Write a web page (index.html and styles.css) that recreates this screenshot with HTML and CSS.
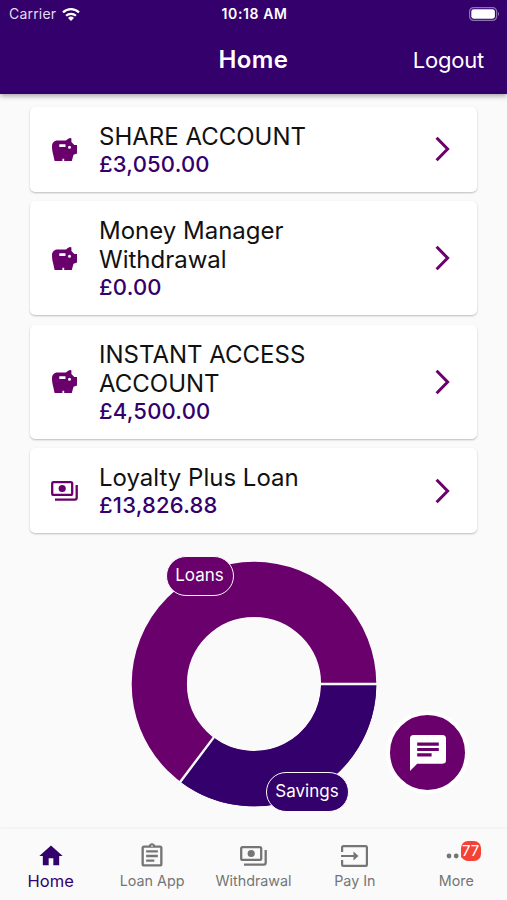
FILE: index.html
```
<!DOCTYPE html>
<html lang="en">
<head>
  <meta charset="UTF-8">
  <meta name="viewport" content="width=device-width, initial-scale=1.0">
  <title>Home</title>
  <link rel="stylesheet" href="styles.css">
</head>
<body>
  <!-- shared icons -->
  <svg width="0" height="0" class="icon-defs">
    <symbol id="piggy" viewBox="0 0 25 23">
      <path fill-rule="evenodd" d="M5.5 2.6H14C15 1.2 16.5 .3 18.5 0L19.4 .6V4L22.3 7H25V15.6L21.5 16.8L19.8 23H12.2V20.8H10.4V23H2.6L1.5 18C.5 14.5 0 11.5 0 8.6C0 5 2 2.6 5.5 2.6ZM7.3 6.3V9H13.5V6.3ZM17.5 7.8A1.5 1.5 0 1 0 17.5 10.8A1.5 1.5 0 1 0 17.5 7.8Z"/>
    </symbol>
    <symbol id="cash" viewBox="0 0 27 20">
      <rect x="1.2" y="1.2" width="20" height="12.6" rx="1.4" fill="none" stroke="currentColor" stroke-width="2.3"/>
      <circle cx="11.2" cy="7.5" r="3.6"/>
      <path d="M25.7 4V16.8Q25.7 18.7 23.8 18.7H4" fill="none" stroke="currentColor" stroke-width="2.3"/>
    </symbol>
    <symbol id="chevron" viewBox="0 0 15 26">
      <path d="M1.6 1.8L12.6 13L1.6 24.2" fill="none" stroke="currentColor" stroke-width="3"/>
    </symbol>
  </svg>

  <header>
    <div class="status-bar">
      <div class="carrier">
        Carrier
        <svg class="wifi" viewBox="0 0 18 14">
          <path d="M9 14L6 11A4.3 4.3 0 0 1 12 11Z" fill="#fff"/>
          <path d="M4.1 8.8A7 7 0 0 1 13.9 8.8M1 5.3A11.6 11.6 0 0 1 17 5.3" fill="none" stroke="#fff" stroke-width="2.3"/>
        </svg>
      </div>
      <div class="time">10:18 AM</div>
      <svg class="battery" viewBox="0 0 31 14">
        <rect x=".6" y=".6" width="27" height="12.8" rx="4" fill="none" stroke="#8c74b0" stroke-width="1.2"/>
        <rect x="2.3" y="2.3" width="23.6" height="9.4" rx="2.4" fill="#fff"/>
        <path d="M29 4.8Q31 7 29 9.2Z" fill="#8c74b0"/>
      </svg>
    </div>
    <div class="title-bar">
      <h1>Home</h1>
      <a class="logout">Logout</a>
    </div>
  </header>

  <main>
    <section class="accounts">
      <div class="account">
        <svg class="piggy"><use href="#piggy"/></svg>
        <div class="account-text">
          <div class="name">SHARE ACCOUNT</div>
          <div class="balance">£3,050.00</div>
        </div>
        <svg class="chevron"><use href="#chevron"/></svg>
      </div>
      <div class="account">
        <svg class="piggy"><use href="#piggy"/></svg>
        <div class="account-text">
          <div class="name">Money Manager<br>Withdrawal</div>
          <div class="balance">£0.00</div>
        </div>
        <svg class="chevron"><use href="#chevron"/></svg>
      </div>
      <div class="account">
        <svg class="piggy"><use href="#piggy"/></svg>
        <div class="account-text">
          <div class="name">INSTANT ACCESS<br>ACCOUNT</div>
          <div class="balance">£4,500.00</div>
        </div>
        <svg class="chevron"><use href="#chevron"/></svg>
      </div>
      <div class="account">
        <svg class="cash"><use href="#cash"/></svg>
        <div class="account-text">
          <div class="name">Loyalty Plus Loan</div>
          <div class="balance">£13,826.88</div>
        </div>
        <svg class="chevron"><use href="#chevron"/></svg>
      </div>
    </section>

    <!-- loans / savings split -->
    <section class="chart">
      <svg viewBox="-123 -123 246 246">
        <circle r="94.7" fill="none" stroke="#6a006c" stroke-width="55.2"/>
        <path d="M94.7 0A94.7 94.7 0 0 1 -57 75.6" fill="none" stroke="#34006c" stroke-width="55.2"/>
        <path d="M65 0H123M-39.1 51.9L-74.4 98.7" stroke="#fafafa" stroke-width="2.4"/>
      </svg>
      <span class="pill loans">Loans</span>
      <span class="pill savings">Savings</span>
    </section>
  </main>

  <button class="chat">
    <svg viewBox="0 0 36 36">
      <path fill="#fff" d="M3.6 0H32.4Q36 0 36 3.6V25.2Q36 28.8 32.4 28.8H7.2L0 36V3.6Q0 0 3.6 0Z"/>
      <path d="M7.2 9.2H28.8M7.2 14.5H28.8M7.2 19.8H21.6" stroke="#6a006c" stroke-width="3.2"/>
    </svg>
  </button>

  <nav>
    <a class="tab active">
      <svg viewBox="0 0 24 24"><path d="M10 20v-6h4v6h5v-8h3L12 3 2 12h3v8z"/></svg>
      <span>Home</span>
    </a>
    <a class="tab">
      <svg viewBox="0 0 24 24"><path d="M7 15h7v2H7zm0-4h10v2H7zm0-4h10v2H7zm12-4h-4.18C14.4 1.84 13.3 1 12 1c-1.3 0-2.4.84-2.82 2H5c-1.1 0-2 .9-2 2v14c0 1.1.9 2 2 2h14c1.1 0 2-.9 2-2V5c0-1.1-.9-2-2-2zm-7-.25c.41 0 .75.34.75.75s-.34.75-.75.75-.75-.34-.75-.75.34-.75.75-.75zM19 19H5V5h14v14z"/></svg>
      <span>Loan App</span>
    </a>
    <a class="tab">
      <svg class="tab-cash"><use href="#cash"/></svg>
      <span>Withdrawal</span>
    </a>
    <a class="tab">
      <svg class="tab-pay" viewBox="0 0 27 22">
        <path d="M1.1 7V2.5Q1.1 1.1 2.5 1.1H24.5Q25.9 1.1 25.9 2.5V19.5Q25.9 20.9 24.5 20.9H2.5Q1.1 20.9 1.1 19.5V15M0 11H14" fill="none" stroke="currentColor" stroke-width="2.2"/>
        <path d="M12.5 6.5L17.5 11L12.5 15.5Z"/>
      </svg>
      <span>Pay In</span>
    </a>
    <a class="tab">
      <svg viewBox="0 0 28 28"><circle cx="7" cy="14" r="2.4"/><circle cx="14.2" cy="14" r="2.4"/><circle cx="21.4" cy="14" r="2.4"/></svg>
      <b class="badge">77</b>
      <span>More</span>
    </a>
  </nav>
</body>
</html>
```
FILE: styles.css
```
* {
  box-sizing: border-box;
}
body {
  margin: 0;
  height: 900px;
  display: flex;
  flex-direction: column;
  position: relative;
  overflow: hidden;
  background: #fafafa;
  color: #111;
  font-family: Inter, "Liberation Sans", sans-serif;
}
svg {
  display: block;
  fill: currentColor;
  flex: none;
}
.icon-defs {
  position: absolute;
}
/* Header */
header {
  height: 94px;
  flex: none;
  background: #34006c;
  color: #fff;
  box-shadow: 0 2px 5px rgba(0, 0, 0, 0.35);
  z-index: 1;
}
.status-bar {
  display: grid;
  grid-template-columns: 1fr auto 1fr;
  align-items: center;
  height: 27px;
  padding: 0 7px 0 9px;
  font-size: 14px;
}
.carrier {
  display: flex;
  align-items: center;
  gap: 6px;
  color: #e5dcf0;
  letter-spacing: 0.2px;
}
.wifi {
  width: 18px;
  height: 14px;
}
.time {
  font-weight: 600;
  font-size: 14px;
  letter-spacing: 0.6px;
}
.battery {
  width: 31px;
  height: 14px;
  justify-self: end;
}
.title-bar {
  display: grid;
  grid-template-columns: 1fr auto 1fr;
  align-items: center;
  height: 65px;
  padding: 0 23px;
}
h1 {
  grid-column: 2;
  margin: 0;
  font-size: 24px;
  font-weight: 600;
  letter-spacing: 0.4px;
}
.logout {
  justify-self: end;
  font-size: 22px;
  letter-spacing: -0.2px;
}
/* Account cards */
main {
  flex: 1;
  padding: 12.6px 30px 0;
}
.accounts {
  display: flex;
  flex-direction: column;
  gap: 9.3px;
}
.account {
  display: flex;
  align-items: center;
  padding: 15.2px 27px 15px 20px;
  background: #fff;
  border-radius: 5px;
  box-shadow: 0 1px 2px rgba(0, 0, 0, 0.25);
  color: #6a006c;
}
.piggy {
  width: 25px;
  height: 23px;
  margin: 0 22px 0 2px;
}
.cash {
  width: 27px;
  height: 20px;
  margin: 0 21px 0 1px;
}
.account-text {
  flex: 1;
}
.name {
  color: #111;
  font-size: 24px;
  line-height: 29px;
}
.balance {
  color: #34006c;
  font-size: 22px;
  font-weight: 500;
  line-height: 26px;
  letter-spacing: 0.2px;
}
.chevron {
  width: 15px;
  height: 26px;
}
/* Donut chart */
.chart {
  position: relative;
  width: 246px;
  margin: 28px auto 0;
}
.chart svg {
  width: 246px;
  height: 246px;
}
.pill {
  position: absolute;
  height: 40px;
  border: 1.5px solid #fafafa;
  border-radius: 20px;
  color: #fff;
  font-size: 17px;
  line-height: 37px;
  text-align: center;
}
.loans {
  left: 35px;
  top: -5px;
  width: 68px;
  background: #6a006c;
}
.savings {
  left: 135px;
  top: 211px;
  width: 83px;
  background: #34006c;
}
/* Floating chat button */
.chat {
  position: absolute;
  left: 386px;
  top: 711px;
  width: 83px;
  height: 83px;
  display: grid;
  place-items: center;
  padding: 0;
  border: 4px solid #fff;
  border-radius: 50%;
  background: #6a006c;
}
.chat svg {
  width: 36px;
  height: 36px;
}
/* Bottom tabs */
nav {
  display: grid;
  grid-template-columns: repeat(5, 1fr);
  height: 71px;
  flex: none;
  box-shadow: 0 -1px 3px rgba(0, 0, 0, 0.05);
}
.tab {
  position: relative;
  display: grid;
  grid-template-rows: 28px 22px;
  justify-items: center;
  align-items: center;
  align-content: start;
  padding-top: 13px;
  color: #757575;
  font-size: 14.3px;
  line-height: 20px;
}
.tab svg {
  width: 28px;
  height: 28px;
}
.tab .tab-cash {
  width: 27px;
  height: 20px;
}
.tab .tab-pay {
  width: 27px;
  height: 22px;
}
.active {
  color: #34006c;
  font-size: 16.5px;
}
.badge {
  position: absolute;
  left: 55px;
  top: 12px;
  width: 20px;
  height: 20px;
  border-radius: 7px;
  background: #f44336;
  color: #fff;
  font-size: 15px;
  font-weight: 400;
  text-align: center;
}
```
